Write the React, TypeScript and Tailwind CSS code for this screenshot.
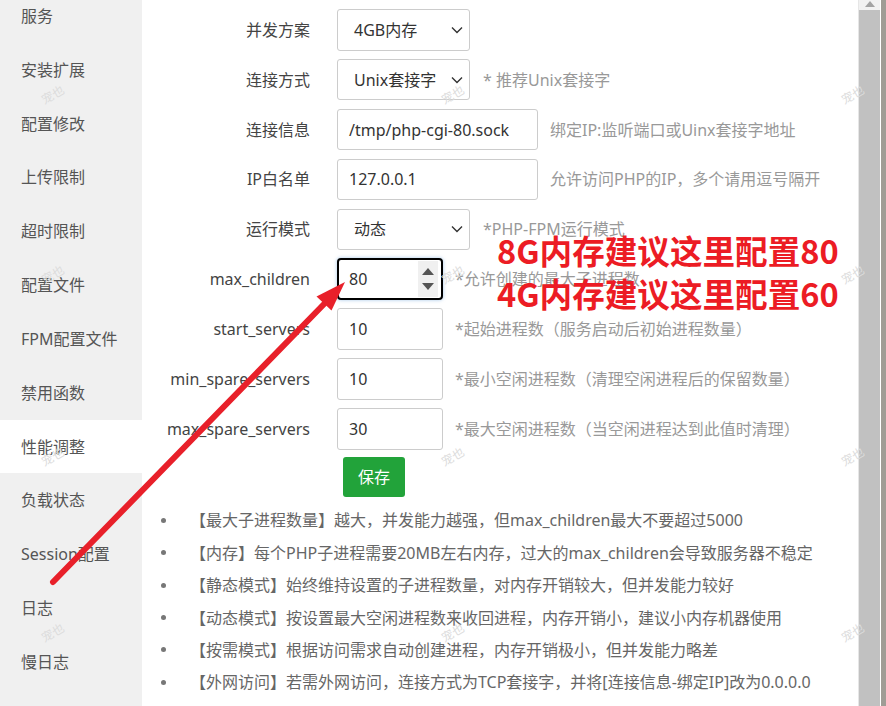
import React from "react";

const sidebar = [
  "服务",
  "安装扩展",
  "配置修改",
  "上传限制",
  "超时限制",
  "配置文件",
  "FPM配置文件",
  "禁用函数",
  "性能调整",
  "负载状态",
  "Session配置",
  "日志",
  "慢日志",
];

const bullets = [
  "【最大子进程数量】越大，并发能力越强，但max_children最大不要超过5000",
  "【内存】每个PHP子进程需要20MB左右内存，过大的max_children会导致服务器不稳定",
  "【静态模式】始终维持设置的子进程数量，对内存开销较大，但并发能力较好",
  "【动态模式】按设置最大空闲进程数来收回进程，内存开销小，建议小内存机器使用",
  "【按需模式】根据访问需求自动创建进程，内存开销极小，但并发能力略差",
  "【外网访问】若需外网访问，连接方式为TCP套接字，并将[连接信息-绑定IP]改为0.0.0.0",
];

const marks = [
  [53, 95], [453, 95], [853, 95],
  [53, 275], [453, 275], [853, 275],
  [53, 457], [453, 457], [853, 457],
  [53, 633], [453, 633], [853, 633],
];

function Chevron() {
  return (
    <svg width="12" height="8" viewBox="0 0 12 8">
      <path d="M1 1.5 L6 6.5 L11 1.5" fill="none" stroke="#333" strokeWidth="1.4" />
    </svg>
  );
}

function Select({ value }: { value: string }) {
  return (
    <div className="flex items-center justify-between w-[133px] h-[41.6px] border border-[#ccc] rounded-[3px] pl-[16px] pr-[6px] text-[#333] bg-white">
      <span>{value}</span>
      <Chevron />
    </div>
  );
}

function TextInput({ value, w }: { value: string; w: string }) {
  return (
    <div className={`flex items-center ${w} h-[41.6px] border border-[#ccc] rounded-[3px] pl-[11px] text-[#333] bg-white`}>
      {value}
    </div>
  );
}

function Row({
  label,
  control,
  hint,
  hintMl = "ml-[12px]",
}: {
  label: string;
  control: React.ReactNode;
  hint?: string;
  hintMl?: string;
}) {
  return (
    <div className="flex items-center h-[41.6px]">
      <div className="w-[168px] text-right text-[#444] whitespace-nowrap">{label}</div>
      <div className="ml-[27px]">{control}</div>
      {hint && <span className={`${hintMl} text-[#999] whitespace-nowrap`}>{hint}</span>}
    </div>
  );
}

export default function App() {
  return (
    <div className="relative w-[886px] h-[706px] overflow-hidden flex bg-white text-[16px] font-['Noto_Sans','Noto_Sans_CJK_SC',sans-serif]">
      {/* Sidebar */}
      <div className="w-[142px] shrink-0 bg-[#f0f0f0]">
        <div className="mt-[-11px]">
          {sidebar.map((s) => (
            <div
              key={s}
              className={`h-[53.83px] flex items-center pl-[21px] text-[#555] whitespace-nowrap ${
                s === "性能调整" ? "bg-white" : ""
              }`}
            >
              {s}
            </div>
          ))}
        </div>
      </div>

      {/* Main */}
      <div className="w-[716px] shrink-0 pt-[9px]">
        <div className="flex flex-col gap-[8.3px]">
          <Row label="并发方案" control={<Select value="4GB内存" />} />
          <Row label="连接方式" control={<Select value="Unix套接字" />} hint="* 推荐Unix套接字" hintMl="ml-[13px]" />
          <Row label="连接信息" control={<TextInput value="/tmp/php-cgi-80.sock" w="w-[201px]" />} hint="绑定IP:监听端口或Uinx套接字地址" />
          <Row label="IP白名单" control={<TextInput value="127.0.0.1" w="w-[201px]" />} hint="允许访问PHP的IP，多个请用逗号隔开" />
          <Row label="运行模式" control={<Select value="动态" />} hint="*PHP-FPM运行模式" hintMl="ml-[13px]" />
          <Row
            label="max_children"
            control={
              <div className="flex items-center w-[106px] h-[41.6px] border-2 border-black rounded-[4px] pl-[10px] text-[#333] bg-white shadow-[0_0_3px_1px_rgba(150,190,230,0.5)]">
                <span className="flex-1">80</span>
                <div className="w-[20px] h-[36px] mr-[3px] bg-[#f0f0f0] flex flex-col items-center justify-center gap-[8px]">
                  <svg width="12" height="7" viewBox="0 0 12 7"><path d="M0 7 L6 0 L12 7 Z" fill="#555" /></svg>
                  <svg width="12" height="7" viewBox="0 0 12 7"><path d="M0 0 L6 7 L12 0 Z" fill="#555" /></svg>
                </div>
              </div>
            }
            hint="*允许创建的最大子进程数"
          />
          <Row label="start_servers" control={<TextInput value="10" w="w-[106px]" />} hint="*起始进程数（服务启动后初始进程数量）" />
          <Row label="min_spare_servers" control={<TextInput value="10" w="w-[106px]" />} hint="*最小空闲进程数（清理空闲进程后的保留数量）" />
          <Row label="max_spare_servers" control={<TextInput value="30" w="w-[106px]" />} hint="*最大空闲进程数（当空闲进程达到此值时清理）" />
        </div>
        <div className="mt-[7.5px] ml-[201px]">
          <div className="w-[62px] h-[40px] rounded-[3px] bg-[#22a33a] text-white flex items-center justify-center">保存</div>
        </div>
        <ul className="mt-[7px] ml-[19px]">
          {bullets.map((b) => (
            <li key={b} className="flex items-center h-[32.4px] text-[#666] whitespace-nowrap">
              <span className="w-[5px] h-[5px] rounded-full bg-[#777] mr-[24px]" />
              <span>{b}</span>
            </li>
          ))}
        </ul>
      </div>

      {/* Scrollbar */}
      <div className="w-[22px] shrink-0 flex h-full">
        <div className="w-[1px] bg-[#e6e6e6]" />
        <div className="flex-1 flex flex-col">
          <div className="h-[10px] bg-[#f1f1f1] flex justify-center">
            <svg width="10" height="7" viewBox="0 0 10 7"><path d="M0 7 L5 1 L10 7 Z" fill="#a3a3a3" /></svg>
          </div>
          <div className="flex-1 bg-[#c1c1c1]" />
        </div>
      </div>
      <div className="w-[1px] shrink-0 bg-white" />
      <div className="w-[5px] shrink-0 bg-[#9f9c95]" />

      {/* Watermarks */}
      {marks.map(([x, y], i) => (
        <span
          key={i}
          className="absolute text-[12px] text-[#dcdcdc] -rotate-[30deg] pointer-events-none select-none"
          style={{ left: x - 12, top: y - 9 }}
        >
          宠也
        </span>
      ))}

      {/* Annotation */}
      <div className="absolute left-[497px] top-[228px] text-[32.6px] leading-[43px] font-bold text-[#ec1c24] whitespace-nowrap font-['Noto_Sans_CJK_SC',sans-serif]">
        <div>8G内存建议这里配置80</div>
        <div>4G内存建议这里配置60</div>
      </div>
      <svg className="absolute left-0 top-0 pointer-events-none" width="886" height="706">
        <line x1="53" y1="582" x2="327" y2="301" stroke="#e8202a" strokeWidth="6" strokeLinecap="round" />
        <polygon points="345,282 331.5,310.5 316.5,296.5" fill="#e8202a" />
      </svg>
    </div>
  );
}
